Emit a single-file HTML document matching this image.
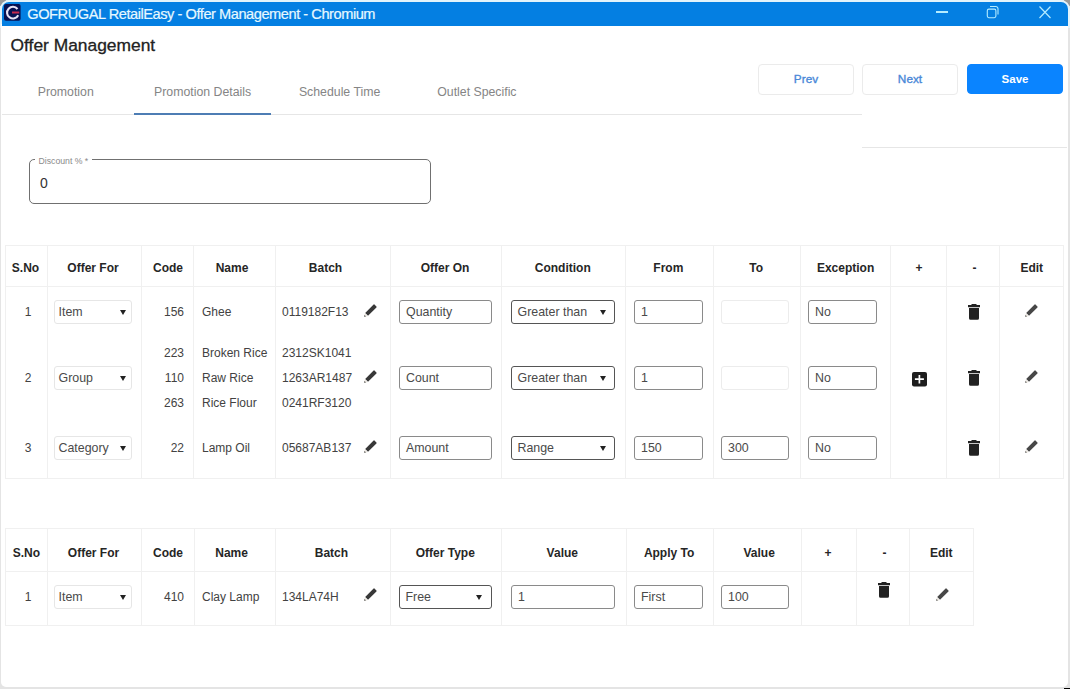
<!DOCTYPE html>
<html><head><meta charset="utf-8"><style>
*{box-sizing:border-box;margin:0;padding:0}
html,body{width:1070px;height:689px;overflow:hidden;background:#e4e4e4;font-family:"Liberation Sans",sans-serif;color:#333}
.win{position:absolute;left:1px;top:24px;width:1067px;height:663px;border-radius:0 0 5px 5px;background:#fff}
.top{position:absolute;left:0;top:0;width:1070px;height:28px;background:#e3f3fb;border-radius:9px 9px 0 0}
.title{position:absolute;left:2px;top:2px;width:1066px;height:24px;background:#047fe2;border-radius:7px 7px 0 0}
.t{position:absolute;white-space:nowrap;line-height:1}
.tab{position:absolute;top:86px;font-size:12.3px;color:#858585;white-space:nowrap;line-height:1}
.btn{position:absolute;top:64px;height:31px;width:96px;border:1px solid #ebebeb;border-radius:4px;font-size:11.5px;font-weight:bold;color:#4a88d8;text-align:center;line-height:29px}
.vl{position:absolute;width:1px;background:#f0f0f0}
.hl{position:absolute;height:1px;background:#f0f0f0}
.h{position:absolute;font-size:12px;font-weight:bold;color:#262626;white-space:nowrap;line-height:1}
.c{position:absolute;font-size:12px;color:#424242;white-space:nowrap;line-height:1}
.sel{position:absolute;height:23px;border:1px solid #e6e6e6;border-radius:3px;background:#fff}
.inp{position:absolute;height:24px;border:1px solid #8a8a8a;border-radius:3px;background:#fff}
.dis{border-color:#ececec}
.dk{border-color:#555}
.it{font-size:12.4px;color:#4a4a4a}
.arr{position:absolute;width:0;height:0;border-left:3.5px solid transparent;border-right:3.5px solid transparent;border-top:5px solid #222}
svg{position:absolute;overflow:visible}
</style></head><body>
<div style="position:absolute;left:0;top:0;width:6px;height:6px;background:#9a9a9a"></div><div style="position:absolute;right:0;top:0;width:6px;height:6px;background:#9a9a9a"></div>
<div class="top"></div>
<div class="win"></div>
<div style="position:absolute;left:1064px;top:688px;width:6px;height:1px;background:#000"></div>
<div class="title"></div>
<svg style="left:4px;top:4px" width="17" height="17" viewBox="0 0 17 17"><rect width="16.6" height="16.8" rx="2" fill="#071152"/><path d="M13.5 5.0A5.85 5.85 0 1 0 14.2 11.2" fill="none" stroke="#e6e2f6" stroke-width="2.1"/><path d="M8 8.5h7.3" stroke="#c8284e" stroke-width="2"/></svg>
<div class="t" style="left:27.3px;top:6.8px;font-size:14.6px;letter-spacing:-0.45px;color:#e6f8ff;-webkit-text-stroke:0.2px #e6f8ff">GOFRUGAL RetailEasy - Offer Management - Chromium</div>
<div style="position:absolute;left:935.5px;top:11.3px;width:12px;height:1.3px;background:#b4ecff"></div>
<svg style="left:985px;top:5px" width="15" height="14" viewBox="0 0 15 14"><rect x="2.3" y="4.1" width="8.6" height="8.6" rx="1.6" fill="none" stroke="#b4ecff" stroke-width="1.1"/><path d="M5 1.5h5.8a2.2 2.2 0 0 1 2.2 2.2V9.6" fill="none" stroke="#b4ecff" stroke-width="1.1"/></svg>
<svg style="left:1039px;top:6px" width="12" height="12.5" viewBox="0 0 12 12.5"><path d="M0.5 0.5L11.5 12M11.5 0.5L0.5 12" stroke="#b4ecff" stroke-width="1.2"/></svg>
<div class="t" style="left:10.5px;top:36.8px;font-size:17.4px;color:#222;-webkit-text-stroke:0.3px #222">Offer Management</div>
<div class="tab" style="left:-14.25px;top:85.8px;width:160px;text-align:center;">Promotion</div>
<div class="tab" style="left:122.6px;top:85.8px;width:160px;text-align:center;">Promotion Details</div>
<div class="tab" style="left:259.6px;top:85.8px;width:160px;text-align:center;">Schedule Time</div>
<div class="tab" style="left:396.9px;top:85.8px;width:160px;text-align:center;">Outlet Specific</div>
<div class="hl" style="left:2px;top:114px;width:860px;background:#e6e6e6"></div>
<div style="position:absolute;left:134px;top:113px;width:137px;height:2px;background:#4d7db4"></div>
<div class="hl" style="left:862px;top:147px;width:205px;background:#e6e6e6"></div>
<div class="btn" style="left:758px;font-weight:normal;font-size:11.8px;-webkit-text-stroke:0.35px #4a88d8">Prev</div>
<div class="btn" style="left:862px;font-weight:normal;font-size:11.8px;-webkit-text-stroke:0.35px #4a88d8">Next</div>
<div class="btn" style="left:967px;border-color:#0a84ff;background:#0a84ff;color:#fff;height:30px;line-height:28px">Save</div>
<div style="position:absolute;left:29px;top:159px;width:402px;height:45px;border:1px solid #707070;border-radius:5px"></div>
<div style="position:absolute;left:35px;top:155px;width:57px;height:8px;background:#fff"></div>
<div class="t" style="left:38.5px;top:157px;font-size:8.7px;color:#8a8a8a">Discount % *</div>
<div class="t" style="left:40px;top:176px;font-size:14px;color:#333">0</div>
<div class="vl" style="left:5px;top:245px;height:234px"></div>
<div class="vl" style="left:47px;top:245px;height:234px"></div>
<div class="vl" style="left:141px;top:245px;height:234px"></div>
<div class="vl" style="left:193px;top:245px;height:234px"></div>
<div class="vl" style="left:275px;top:245px;height:234px"></div>
<div class="vl" style="left:390px;top:245px;height:234px"></div>
<div class="vl" style="left:501px;top:245px;height:234px"></div>
<div class="vl" style="left:625px;top:245px;height:234px"></div>
<div class="vl" style="left:713px;top:245px;height:234px"></div>
<div class="vl" style="left:800px;top:245px;height:234px"></div>
<div class="vl" style="left:890px;top:245px;height:234px"></div>
<div class="vl" style="left:946px;top:245px;height:234px"></div>
<div class="vl" style="left:999px;top:245px;height:234px"></div>
<div class="vl" style="left:1063px;top:245px;height:234px"></div>
<div class="hl" style="left:5px;top:245px;width:1059px"></div>
<div class="hl" style="left:5px;top:286px;width:1059px"></div>
<div class="hl" style="left:5px;top:478px;width:1059px"></div>
<div class="h" style="left:-44.5px;top:262px;width:140px;text-align:center;">S.No</div>
<div class="h" style="left:23.0px;top:262px;width:140px;text-align:center;">Offer For</div>
<div class="h" style="left:98.0px;top:262px;width:140px;text-align:center;">Code</div>
<div class="h" style="left:162.0px;top:262px;width:140px;text-align:center;">Name</div>
<div class="h" style="left:255.5px;top:262px;width:140px;text-align:center;">Batch</div>
<div class="h" style="left:375.0px;top:262px;width:140px;text-align:center;">Offer On</div>
<div class="h" style="left:492.79999999999995px;top:262px;width:140px;text-align:center;">Condition</div>
<div class="h" style="left:598.3px;top:262px;width:140px;text-align:center;">From</div>
<div class="h" style="left:686.2px;top:262px;width:140px;text-align:center;">To</div>
<div class="h" style="left:775.6px;top:262px;width:140px;text-align:center;">Exception</div>
<div class="h" style="left:849.0px;top:262px;width:140px;text-align:center;">+</div>
<div class="h" style="left:904.5px;top:262px;width:140px;text-align:center;">-</div>
<div class="h" style="left:961.8px;top:262px;width:140px;text-align:center;">Edit</div>
<div class="c" style="left:8.0px;top:306px;width:40px;text-align:center;">1</div>
<div class="sel" style="left:54px;top:300px;width:77.5px;height:24px"></div>
<div class="c it" style="left:58.5px;top:306px;">Item</div>
<div class="arr" style="left:119.5px;top:310.0px"></div>
<div class="c" style="left:84px;top:306.0px;width:100px;text-align:right;">156</div>
<div class="c" style="left:202px;top:306.0px;">Ghee</div>
<div class="c" style="left:282px;top:306.0px;">0119182F13</div>
<svg style="left:360.40000000000003px;top:300.5px" width="20" height="20" viewBox="-10 -10 20 20"><g transform="rotate(-45)"><path fill="#383838" d="M-4.8 -2H7.1a0.6 0.6 0 0 1 0.6 0.6V1.4a0.6 0.6 0 0 1-0.6 0.6H-4.8z"/><path fill="#e9e4dc" d="M-5.4 -2L-8.1 0L-5.4 2z"/><path fill="#383838" d="M-6.8 -1L-8.2 0L-6.8 1z"/></g></svg>
<div class="inp" style="left:399px;top:300px;width:93px;height:24px"></div>
<div class="c it" style="left:406px;top:305.5px;">Quantity</div>
<div class="inp dk" style="left:511px;top:300px;width:104px;height:24px"></div>
<div class="c it" style="left:517.5px;top:305.5px;">Greater than</div>
<div class="arr" style="left:600px;top:310.0px"></div>
<div class="inp" style="left:634px;top:300px;width:69px;height:24px"></div>
<div class="c it" style="left:641px;top:305.5px;">1</div>
<div class="inp dis" style="left:721px;top:300px;width:68px;height:24px"></div>
<div class="inp" style="left:808px;top:300px;width:69px;height:24px"></div>
<div class="c it" style="left:815px;top:305.5px;">No</div>
<svg style="left:968px;top:304px" width="12" height="16" viewBox="0 0 12 16"><path fill="#222" d="M3.5 0h5v1H12v2.2H0V1h3.5z M1 4H11V14.2a1.5 1.5 0 0 1-1.5 1.5H2.5A1.5 1.5 0 0 1 1 14.2z"/></svg>
<svg style="left:1021.3999999999999px;top:301.0px" width="20" height="20" viewBox="-10 -10 20 20"><g transform="rotate(-45)"><path fill="#474747" d="M-4.8 -2H7.1a0.6 0.6 0 0 1 0.6 0.6V1.4a0.6 0.6 0 0 1-0.6 0.6H-4.8z"/><path fill="#e9e4dc" d="M-5.4 -2L-8.1 0L-5.4 2z"/><path fill="#474747" d="M-6.8 -1L-8.2 0L-6.8 1z"/></g></svg>
<div class="c" style="left:8.0px;top:372px;width:40px;text-align:center;">2</div>
<div class="sel" style="left:54px;top:366px;width:77.5px;height:24px"></div>
<div class="c it" style="left:58.5px;top:372px;">Group</div>
<div class="arr" style="left:119.5px;top:376.0px"></div>
<div class="c" style="left:84px;top:347.0px;width:100px;text-align:right;">223</div>
<div class="c" style="left:202px;top:347.0px;">Broken Rice</div>
<div class="c" style="left:282px;top:347.0px;">2312SK1041</div>
<div class="c" style="left:84px;top:372.0px;width:100px;text-align:right;">110</div>
<div class="c" style="left:202px;top:372.0px;">Raw Rice</div>
<div class="c" style="left:282px;top:372.0px;">1263AR1487</div>
<div class="c" style="left:84px;top:397.0px;width:100px;text-align:right;">263</div>
<div class="c" style="left:202px;top:397.0px;">Rice Flour</div>
<div class="c" style="left:282px;top:397.0px;">0241RF3120</div>
<svg style="left:360.40000000000003px;top:366.5px" width="20" height="20" viewBox="-10 -10 20 20"><g transform="rotate(-45)"><path fill="#383838" d="M-4.8 -2H7.1a0.6 0.6 0 0 1 0.6 0.6V1.4a0.6 0.6 0 0 1-0.6 0.6H-4.8z"/><path fill="#e9e4dc" d="M-5.4 -2L-8.1 0L-5.4 2z"/><path fill="#383838" d="M-6.8 -1L-8.2 0L-6.8 1z"/></g></svg>
<div class="inp" style="left:399px;top:366px;width:93px;height:24px"></div>
<div class="c it" style="left:406px;top:371.5px;">Count</div>
<div class="inp dk" style="left:511px;top:366px;width:104px;height:24px"></div>
<div class="c it" style="left:517.5px;top:371.5px;">Greater than</div>
<div class="arr" style="left:600px;top:376.0px"></div>
<div class="inp" style="left:634px;top:366px;width:69px;height:24px"></div>
<div class="c it" style="left:641px;top:371.5px;">1</div>
<div class="inp dis" style="left:721px;top:366px;width:68px;height:24px"></div>
<div class="inp" style="left:808px;top:366px;width:69px;height:24px"></div>
<div class="c it" style="left:815px;top:371.5px;">No</div>
<svg style="left:912px;top:372px" width="15" height="15" viewBox="0 0 15 15"><rect x="0" y="0" width="15" height="14.6" rx="2" fill="#1e1e1e"/><path d="M7.4 3v8.5M2.9 7.2h9" stroke="#fff" stroke-width="1.7"/></svg>
<svg style="left:968px;top:370px" width="12" height="16" viewBox="0 0 12 16"><path fill="#222" d="M3.5 0h5v1H12v2.2H0V1h3.5z M1 4H11V14.2a1.5 1.5 0 0 1-1.5 1.5H2.5A1.5 1.5 0 0 1 1 14.2z"/></svg>
<svg style="left:1021.3999999999999px;top:367.0px" width="20" height="20" viewBox="-10 -10 20 20"><g transform="rotate(-45)"><path fill="#474747" d="M-4.8 -2H7.1a0.6 0.6 0 0 1 0.6 0.6V1.4a0.6 0.6 0 0 1-0.6 0.6H-4.8z"/><path fill="#e9e4dc" d="M-5.4 -2L-8.1 0L-5.4 2z"/><path fill="#474747" d="M-6.8 -1L-8.2 0L-6.8 1z"/></g></svg>
<div class="c" style="left:8.0px;top:442px;width:40px;text-align:center;">3</div>
<div class="sel" style="left:54px;top:436px;width:77.5px;height:24px"></div>
<div class="c it" style="left:58.5px;top:442px;">Category</div>
<div class="arr" style="left:119.5px;top:446.0px"></div>
<div class="c" style="left:84px;top:442.0px;width:100px;text-align:right;">22</div>
<div class="c" style="left:202px;top:442.0px;">Lamp Oil</div>
<div class="c" style="left:282px;top:442.0px;">05687AB137</div>
<svg style="left:360.40000000000003px;top:436.5px" width="20" height="20" viewBox="-10 -10 20 20"><g transform="rotate(-45)"><path fill="#383838" d="M-4.8 -2H7.1a0.6 0.6 0 0 1 0.6 0.6V1.4a0.6 0.6 0 0 1-0.6 0.6H-4.8z"/><path fill="#e9e4dc" d="M-5.4 -2L-8.1 0L-5.4 2z"/><path fill="#383838" d="M-6.8 -1L-8.2 0L-6.8 1z"/></g></svg>
<div class="inp" style="left:399px;top:436px;width:93px;height:24px"></div>
<div class="c it" style="left:406px;top:441.5px;">Amount</div>
<div class="inp dk" style="left:511px;top:436px;width:104px;height:24px"></div>
<div class="c it" style="left:517.5px;top:441.5px;">Range</div>
<div class="arr" style="left:600px;top:446.0px"></div>
<div class="inp" style="left:634px;top:436px;width:69px;height:24px"></div>
<div class="c it" style="left:641px;top:441.5px;">150</div>
<div class="inp" style="left:721px;top:436px;width:68px;height:24px"></div>
<div class="c it" style="left:728px;top:441.5px;">300</div>
<div class="inp" style="left:808px;top:436px;width:69px;height:24px"></div>
<div class="c it" style="left:815px;top:441.5px;">No</div>
<svg style="left:968px;top:440px" width="12" height="16" viewBox="0 0 12 16"><path fill="#222" d="M3.5 0h5v1H12v2.2H0V1h3.5z M1 4H11V14.2a1.5 1.5 0 0 1-1.5 1.5H2.5A1.5 1.5 0 0 1 1 14.2z"/></svg>
<svg style="left:1021.3999999999999px;top:437.0px" width="20" height="20" viewBox="-10 -10 20 20"><g transform="rotate(-45)"><path fill="#474747" d="M-4.8 -2H7.1a0.6 0.6 0 0 1 0.6 0.6V1.4a0.6 0.6 0 0 1-0.6 0.6H-4.8z"/><path fill="#e9e4dc" d="M-5.4 -2L-8.1 0L-5.4 2z"/><path fill="#474747" d="M-6.8 -1L-8.2 0L-6.8 1z"/></g></svg>
<div class="vl" style="left:5px;top:528px;height:98px"></div>
<div class="vl" style="left:47px;top:528px;height:98px"></div>
<div class="vl" style="left:141px;top:528px;height:98px"></div>
<div class="vl" style="left:194px;top:528px;height:98px"></div>
<div class="vl" style="left:275px;top:528px;height:98px"></div>
<div class="vl" style="left:390px;top:528px;height:98px"></div>
<div class="vl" style="left:501px;top:528px;height:98px"></div>
<div class="vl" style="left:626px;top:528px;height:98px"></div>
<div class="vl" style="left:713px;top:528px;height:98px"></div>
<div class="vl" style="left:801px;top:528px;height:98px"></div>
<div class="vl" style="left:856px;top:528px;height:98px"></div>
<div class="vl" style="left:909px;top:528px;height:98px"></div>
<div class="vl" style="left:973px;top:528px;height:98px"></div>
<div class="hl" style="left:5px;top:528px;width:969px"></div>
<div class="hl" style="left:5px;top:571px;width:969px"></div>
<div class="hl" style="left:5px;top:625px;width:969px"></div>
<div class="h" style="left:-43.6px;top:547px;width:140px;text-align:center;">S.No</div>
<div class="h" style="left:23.5px;top:547px;width:140px;text-align:center;">Offer For</div>
<div class="h" style="left:98.0px;top:547px;width:140px;text-align:center;">Code</div>
<div class="h" style="left:161.6px;top:547px;width:140px;text-align:center;">Name</div>
<div class="h" style="left:261.4px;top:547px;width:140px;text-align:center;">Batch</div>
<div class="h" style="left:375.3px;top:547px;width:140px;text-align:center;">Offer Type</div>
<div class="h" style="left:492.29999999999995px;top:547px;width:140px;text-align:center;">Value</div>
<div class="h" style="left:599.1px;top:547px;width:140px;text-align:center;">Apply To</div>
<div class="h" style="left:689.2px;top:547px;width:140px;text-align:center;">Value</div>
<div class="h" style="left:758.0px;top:547px;width:140px;text-align:center;">+</div>
<div class="h" style="left:814.5px;top:547px;width:140px;text-align:center;">-</div>
<div class="h" style="left:871.3px;top:547px;width:140px;text-align:center;">Edit</div>
<div class="c" style="left:8.0px;top:591px;width:40px;text-align:center;">1</div>
<div class="sel" style="left:54px;top:585px;width:77.5px;height:24px"></div>
<div class="c it" style="left:58.5px;top:591px;">Item</div>
<div class="arr" style="left:119.5px;top:595.0px"></div>
<div class="c" style="left:84px;top:591px;width:100px;text-align:right;">410</div>
<div class="c" style="left:202px;top:591px;">Clay Lamp</div>
<div class="c" style="left:282px;top:591px;">134LA74H</div>
<svg style="left:360.40000000000003px;top:585.0px" width="20" height="20" viewBox="-10 -10 20 20"><g transform="rotate(-45)"><path fill="#383838" d="M-4.8 -2H7.1a0.6 0.6 0 0 1 0.6 0.6V1.4a0.6 0.6 0 0 1-0.6 0.6H-4.8z"/><path fill="#e9e4dc" d="M-5.4 -2L-8.1 0L-5.4 2z"/><path fill="#383838" d="M-6.8 -1L-8.2 0L-6.8 1z"/></g></svg>
<div class="inp dk" style="left:399px;top:585px;width:93px;height:24px"></div>
<div class="c it" style="left:405.5px;top:590.5px;">Free</div>
<div class="arr" style="left:476px;top:595.0px"></div>
<div class="inp" style="left:511px;top:585px;width:104px;height:24px"></div>
<div class="c it" style="left:518px;top:590.5px;">1</div>
<div class="inp" style="left:634px;top:585px;width:69px;height:24px"></div>
<div class="c it" style="left:641px;top:590.5px;">First</div>
<div class="inp" style="left:721px;top:585px;width:68px;height:24px"></div>
<div class="c it" style="left:728px;top:590.5px;">100</div>
<svg style="left:878px;top:582px" width="12" height="16" viewBox="0 0 12 16"><path fill="#222" d="M3.5 0h5v1H12v2.2H0V1h3.5z M1 4H11V14.2a1.5 1.5 0 0 1-1.5 1.5H2.5A1.5 1.5 0 0 1 1 14.2z"/></svg>
<svg style="left:931.6px;top:585.0px" width="20" height="20" viewBox="-10 -10 20 20"><g transform="rotate(-45)"><path fill="#474747" d="M-4.8 -2H7.1a0.6 0.6 0 0 1 0.6 0.6V1.4a0.6 0.6 0 0 1-0.6 0.6H-4.8z"/><path fill="#e9e4dc" d="M-5.4 -2L-8.1 0L-5.4 2z"/><path fill="#474747" d="M-6.8 -1L-8.2 0L-6.8 1z"/></g></svg>
</body></html>
